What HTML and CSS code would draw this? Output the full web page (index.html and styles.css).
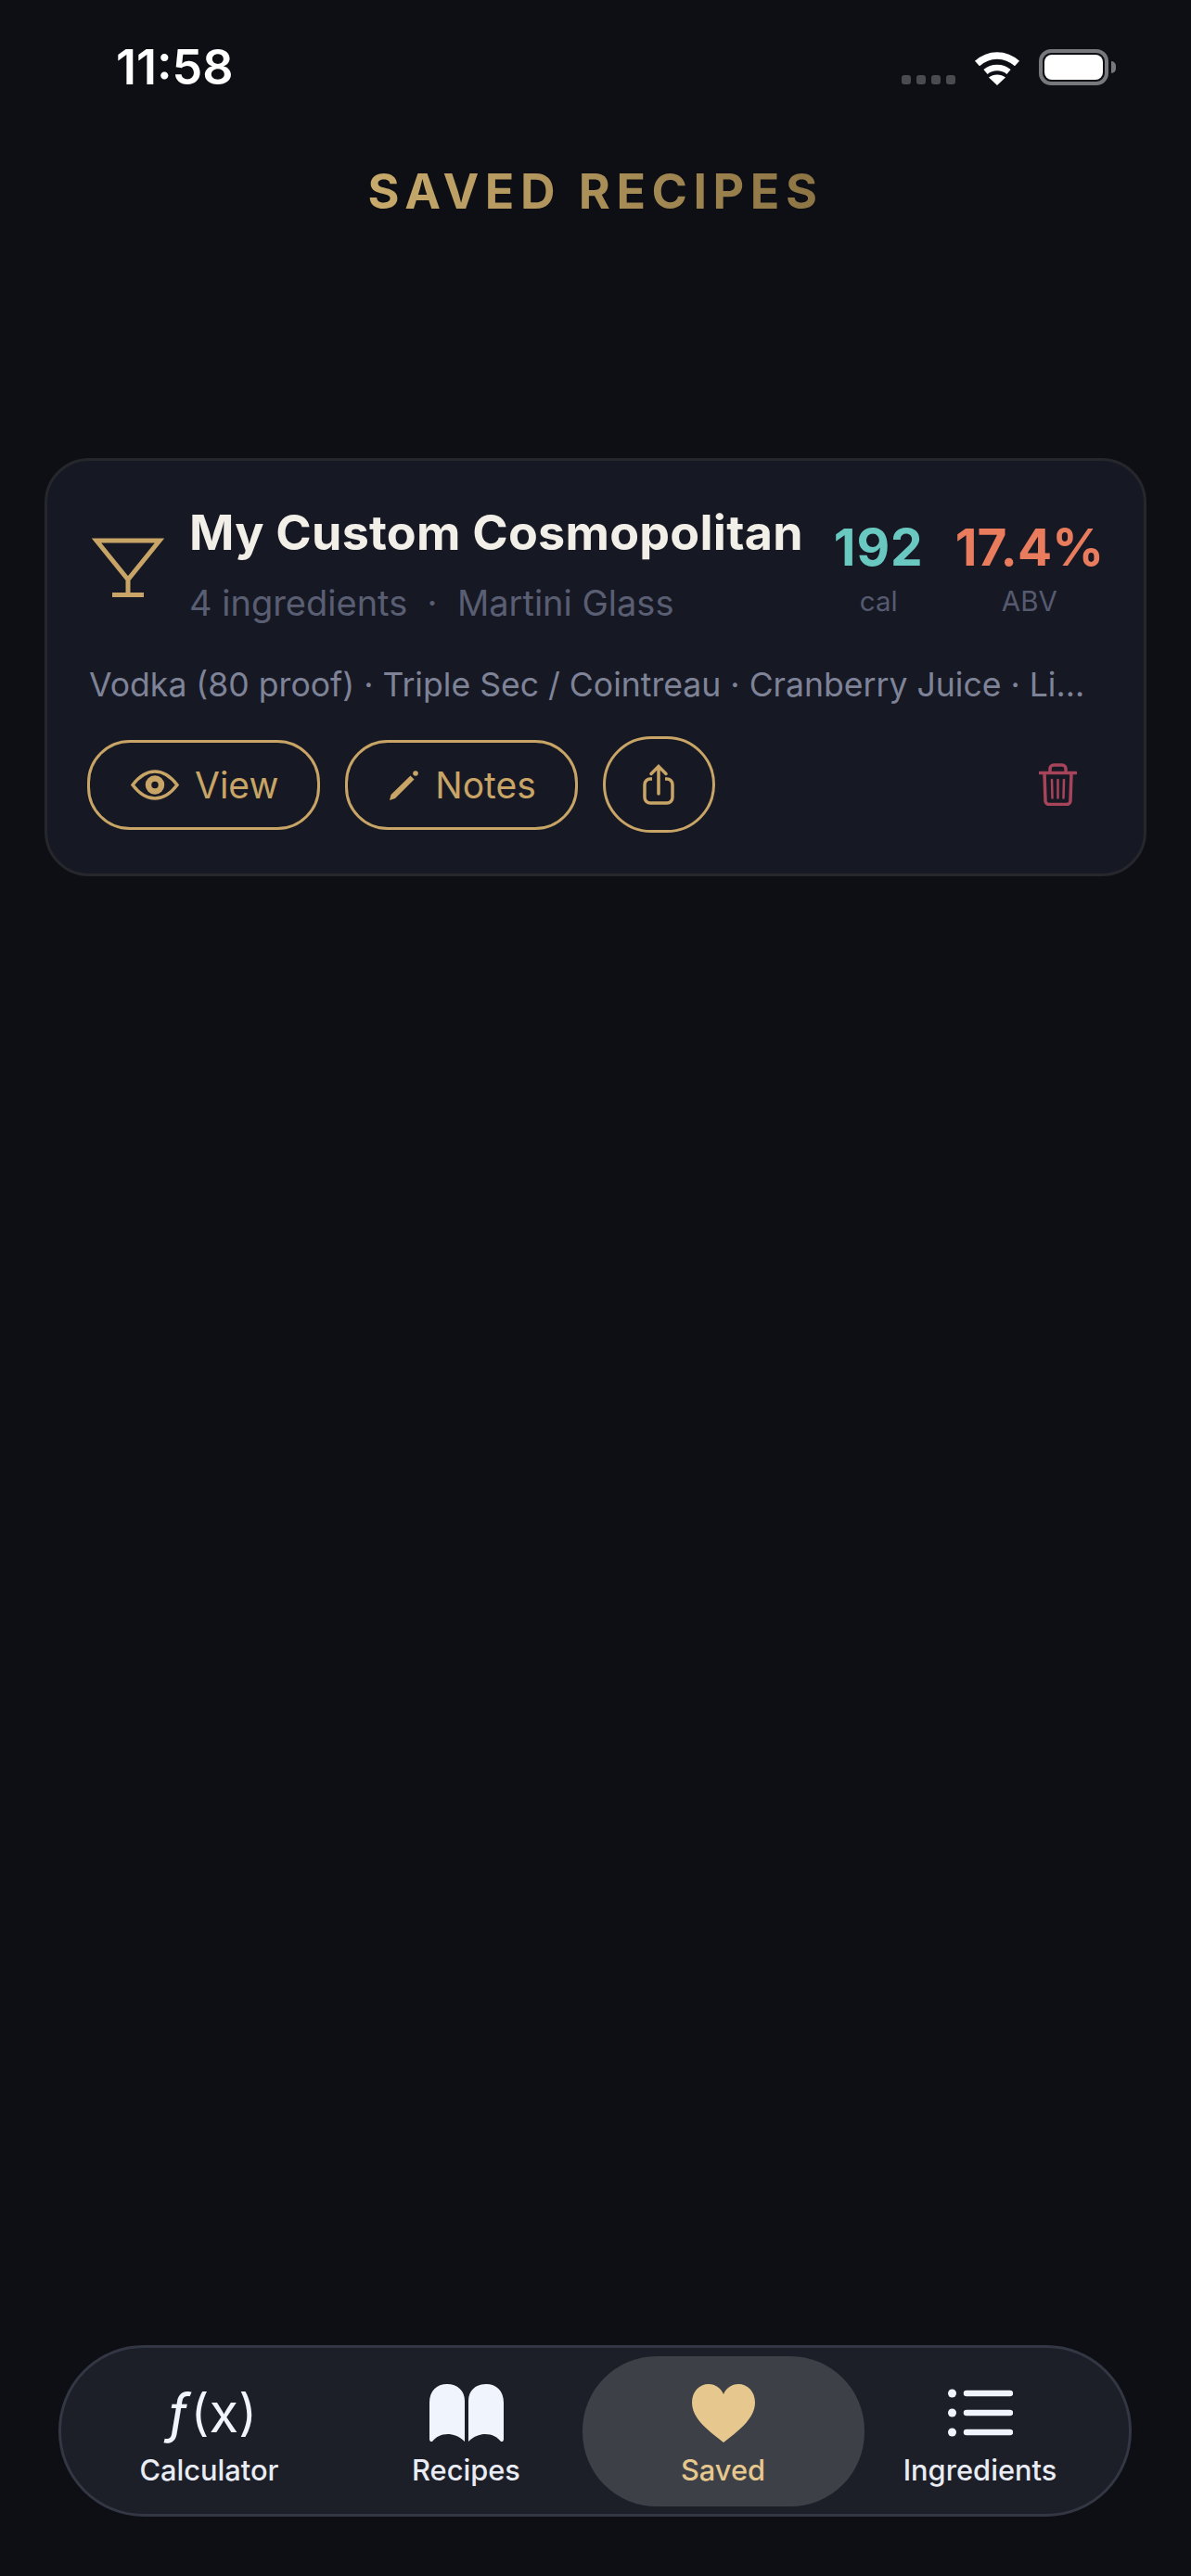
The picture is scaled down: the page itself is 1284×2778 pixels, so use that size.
FILE: index.html
```html
<!DOCTYPE html>
<html lang="en">
<head>
    <meta charset="UTF-8">
    <meta name="viewport" content="width=device-width, initial-scale=1.0">
    <title>Saved Recipes</title>
    <link rel="stylesheet" href="styles.css">
</head>
<body>

    <!-- Status bar -->
    <div class="status-bar">
        <span class="status-time">11:58</span>
        <div class="status-icons">
            <div class="signal"><i></i><i></i><i></i><i></i></div>
            <svg class="wifi" width="50" height="37" viewBox="0 0 50 37">
                <path d="M3.5 13.5C16 2 34 2 46.500 13.500" fill="none" stroke="#fff" stroke-width="7.500"/>
                <path d="M12.500 22.500C19.500 16.500 30.500 16.500 37.500 22.500" fill="none" stroke="#fff" stroke-width="6.500"/>
                <path d="M25 37L16 28.500C21 24.500 29 24.500 34 28.500Z" fill="#fff"/>
            </svg>
            <div class="battery"><div class="battery-fill"></div></div>
        </div>
    </div>

    <h1 class="page-title">SAVED RECIPES</h1>

    <!-- Saved recipe -->
    <div class="recipe-card">
        <div class="recipe-head">
            <svg class="glass-icon" width="78" height="64" viewBox="0 0 78 64">
                <path d="M5 3H73L39 45Z M39 45V61.500 M22 61.500H56" fill="none" stroke="#c8a566" stroke-width="5"/>
            </svg>
            <div class="recipe-info">
                <div class="recipe-name">My Custom Cosmopolitan</div>
                <div class="recipe-meta">4 ingredients &nbsp;·&nbsp; Martini Glass</div>
            </div>
            <div class="recipe-stats">
                <div class="stat">
                    <div class="stat-value stat-cal">192</div>
                    <div class="stat-label">cal</div>
                </div>
                <div class="stat">
                    <div class="stat-value stat-abv">17.4%</div>
                    <div class="stat-label">ABV</div>
                </div>
            </div>
        </div>

        <div class="recipe-ingredients">Vodka (80 proof) · Triple Sec / Cointreau · Cranberry Juice · Li…</div>

        <div class="recipe-actions">
            <button class="btn">
                <svg width="52" height="33" viewBox="0 0 52 33">
                    <path d="M2 16.500C10 6 18 2 26 2S42 6 50 16.500C42 27 34 31 26 31S10 27 2 16.500Z" fill="none" stroke="#c8a566" stroke-width="3.500"/>
                    <circle cx="26" cy="16.500" r="7" fill="none" stroke="#c8a566" stroke-width="6.500"/>
                </svg>
                View
            </button>
            <button class="btn">
                <svg width="33" height="33" viewBox="0 0 33 33">
                    <path d="M1 33L2.500 27L23.500 6.500L27.500 10.500L7 31Z" fill="#c8a566"/>
                    <circle cx="29" cy="4" r="2.800" fill="#c8a566"/>
                </svg>
                Notes
            </button>
            <button class="btn btn-round">
                <svg width="34" height="44" viewBox="0 0 34 44">
                    <path d="M10 16H8a6 6 0 0 0-6 6v14a6 6 0 0 0 6 6h18a6 6 0 0 0 6-6V22a6 6 0 0 0-6-6h-2" fill="none" stroke="#c8a566" stroke-width="3.500"/>
                    <path d="M17 32V3 M9 10.500L17 2.500L25 10.500" fill="none" stroke="#c8a566" stroke-width="3.500" stroke-linecap="round"/>
                </svg>
            </button>
            <svg class="trash-icon" width="41" height="46" viewBox="0 0 41 46">
                <path d="M1 10.500H40" stroke="#a8445a" stroke-width="3.500" stroke-linecap="round"/>
                <path d="M12 10V6a4 4 0 0 1 4-4h9a4 4 0 0 1 4 4v4" fill="none" stroke="#a8445a" stroke-width="3.500"/>
                <path d="M6 11L7 40a4 4 0 0 0 4 4.500H30a4 4 0 0 0 4-4.500L35 11" fill="none" stroke="#a8445a" stroke-width="3.500"/>
                <path d="M14 18L14.500 37.500 M20.500 18V37.500 M27 18L26.500 37.500" stroke="#a8445a" stroke-width="2.500" stroke-linecap="round"/>
            </svg>
        </div>
    </div>

    <!-- Tab bar -->
    <nav class="tab-bar">
        <div class="tab">
            <div class="tab-icon tab-fx"><span class="fx-f">ƒ</span>(<span class="fx-x">x</span>)</div>
            <div class="tab-label">Calculator</div>
        </div>
        <div class="tab">
            <div class="tab-icon">
                <svg width="80" height="62" viewBox="0 0 80 62">
                    <path d="M0 20C0 7 8 0 19 0C30 0 38 7 38 18V62C32 56 25 54 20 54C12 54 7 57 3 62H1L0 60Z" fill="#f0f4fd"/>
                    <path d="M80 20C80 7 72 0 61 0C50 0 42 7 42 18V62C48 56 55 54 60 54C68 54 73 57 77 62H79L80 60Z" fill="#f0f4fd"/>
                </svg>
            </div>
            <div class="tab-label">Recipes</div>
        </div>
        <div class="tab tab-active">
            <div class="tab-icon">
                <svg width="68" height="63" viewBox="0 0 68 63">
                    <path d="M34 63C20 52 0 38 0 20C0 8 8 0 18 0C25 0 31 4 34 11C37 4 43 0 50 0C60 0 68 8 68 20C68 38 48 52 34 63Z" fill="#e6c88e"/>
                </svg>
            </div>
            <div class="tab-label">Saved</div>
        </div>
        <div class="tab">
            <div class="tab-icon">
                <svg width="70" height="52" viewBox="0 0 70 52">
                    <circle cx="4.500" cy="5" r="4.500" fill="#f0f4fd"/>
                    <circle cx="4.500" cy="26" r="4.500" fill="#f0f4fd"/>
                    <circle cx="4.500" cy="47" r="4.500" fill="#f0f4fd"/>
                    <path d="M20 5H67 M20 26H67 M20 47H67" stroke="#f0f4fd" stroke-width="6.500" stroke-linecap="round"/>
                </svg>
            </div>
            <div class="tab-label">Ingredients</div>
        </div>
    </nav>

</body>
</html>
```
FILE: styles.css
```css
body {
    font-family: Inter, "Liberation Sans", sans-serif;
    background-color: #0d0f14;
    color: #ffffff;
    margin: 0;
    padding: 0;
    width: 1284px;
    height: 2778px;
    overflow: hidden;
    display: flex;
    flex-direction: column;
}

/* Status bar */
.status-bar {
    display: flex;
    justify-content: space-between;
    align-items: center;
    height: 39px;
    margin-top: 53px;
    padding: 0 82px 0 125px;
}

.status-time {
    font-size: 52px;
    line-height: 52px;
    font-weight: 600;
    color: #ffffff;
}

.status-icons {
    display: flex;
    align-items: flex-end;
    gap: 20px;
}

.signal {
    display: flex;
    gap: 6px;
    margin-bottom: 1px;
}

.signal i {
    width: 10px;
    height: 10px;
    border-radius: 3px;
    background-color: #4a4b4f;
}

.battery {
    position: relative;
    box-sizing: border-box;
    width: 75px;
    height: 39px;
    margin-right: 7px;
    padding: 2px;
    border: 4px solid #77787b;
    border-radius: 13px;
}

.battery::after {
    content: "";
    position: absolute;
    right: -12px;
    top: 9px;
    width: 5px;
    height: 13px;
    background-color: #77787b;
    border-radius: 0 6px 6px 0;
}

.battery-fill {
    height: 100%;
    background-color: #ffffff;
    border-radius: 8px;
}

/* Title */
.page-title {
    margin: 85px 0 0;
    text-align: center;
    font-size: 52px;
    line-height: 60px;
    font-weight: 700;
    letter-spacing: 6.5px;
    color: transparent;
    background: linear-gradient(90deg, #c8aa6c 397px, #8c7444 881px);
    -webkit-background-clip: text;
    background-clip: text;
}

/* Recipe card */
.recipe-card {
    box-sizing: border-box;
    width: 1188px;
    height: 451px;
    margin: 257px 0 0 48px;
    padding: 48px 43px 44px;
    background-color: #161924;
    border: 3px solid #26272c;
    border-radius: 48px;
}

.recipe-head {
    display: flex;
    height: 129px;
    padding-left: 5px;
}

.glass-icon {
    flex-shrink: 0;
    margin-top: 35px;
    margin-right: 27px;
}

.recipe-info {
    flex: 1;
    white-space: nowrap;
}

.recipe-name {
    font-size: 52px;
    line-height: 60px;
    font-weight: 700;
    letter-spacing: 0.25px;
    color: #f2efe8;
}

.recipe-meta {
    margin-top: 20px;
    font-size: 38px;
    line-height: 50px;
    color: #5a5e73;
}

.recipe-stats {
    display: flex;
    gap: 34px;
    margin-top: 17px;
}

.stat {
    text-align: center;
}

.stat-value {
    font-size: 55px;
    line-height: 56px;
    font-weight: 700;
}

.stat-cal {
    letter-spacing: 1px;
    color: #69c8c0;
}

.stat-abv {
    color: #e87c5d;
}

.stat-label {
    margin-top: 10px;
    font-size: 29.5px;
    line-height: 40px;
    color: #565a70;
}

.recipe-ingredients {
    margin: 40px 0 0 2px;
    font-size: 35.600px;
    line-height: 50px;
    color: #7f8398;
    white-space: nowrap;
}

.recipe-actions {
    display: flex;
    align-items: center;
    gap: 27px;
    margin-top: 30px;
}

.btn {
    display: flex;
    align-items: center;
    gap: 17px;
    box-sizing: border-box;
    height: 97px;
    padding: 0 42px 0 44px;
    background: none;
    border: 3px solid #c8a566;
    border-radius: 46px;
    font-family: inherit;
    font-size: 39px;
    color: #c8a566;
}

.btn-round {
    justify-content: center;
    width: 121px;
    height: 104px;
    padding: 0;
    border-radius: 52px;
}

.trash-icon {
    margin-left: auto;
    margin-right: 29px;
}

/* Tab bar */
.tab-bar {
    display: grid;
    grid-template-columns: repeat(4, 277px);
    box-sizing: border-box;
    width: 1157px;
    height: 185px;
    margin: auto 0 64px 63px;
    padding: 0 0 0 21px;
    background-color: #1c1f27;
    border: 3px solid #333743;
    border-radius: 92px;
}

.tab {
    position: relative;
    display: flex;
    flex-direction: column;
    align-items: center;
    padding-top: 38px;
}

.tab-active::before {
    content: "";
    position: absolute;
    top: 9px;
    bottom: 8px;
    left: -13px;
    right: -14px;
    background-color: #3e4048;
    border-radius: 80px;
}

.tab-icon {
    position: relative;
    display: flex;
    align-items: center;
    justify-content: center;
    height: 64px;
}

.tab-fx {
    margin-left: 6px;
    font-size: 54px;
    line-height: 64px;
    color: #f0f4fd;
}

.fx-f {
    font-size: 58px;
    font-style: italic;
    margin-right: 3px;
}

.fx-x {
    font-size: 58px;
}

.tab-label {
    position: relative;
    margin-top: 10px;
    font-size: 30.800px;
    line-height: 40px;
    font-weight: 500;
    color: #e9ecf5;
}

.tab-active .tab-label {
    color: #e6c88e;
}
```
